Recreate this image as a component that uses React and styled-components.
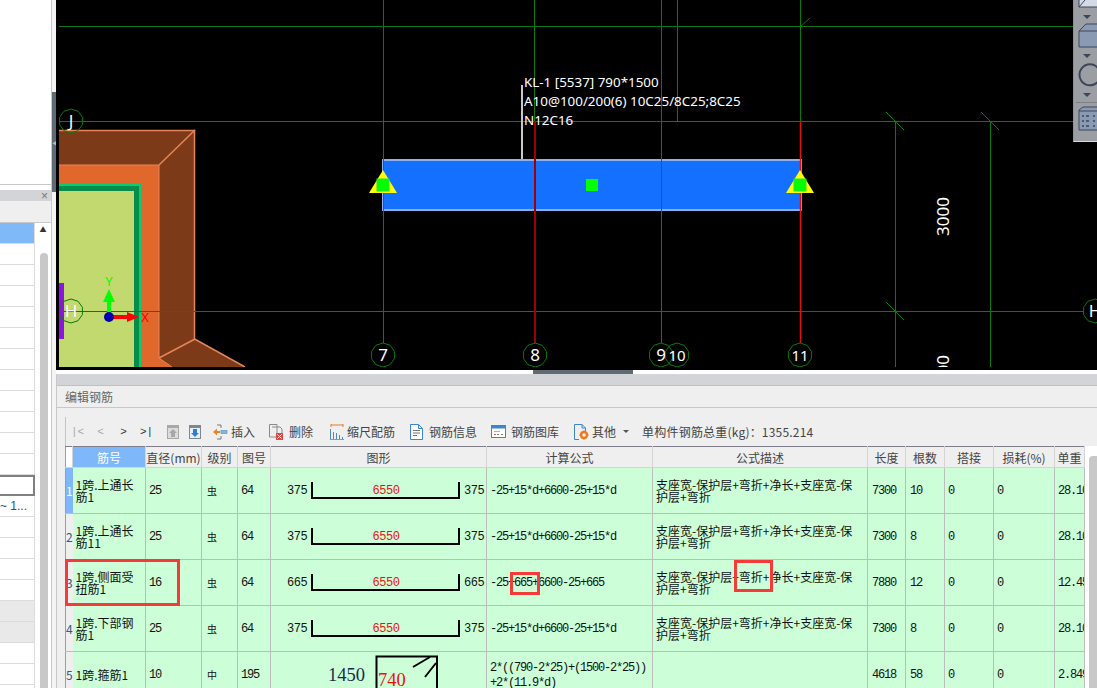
import styled, { createGlobalStyle } from "styled-components";

const GlobalStyle = createGlobalStyle`
  html, body { margin: 0; padding: 0; background: #fff; }
  body { font-family: "Noto Sans CJK SC", "Liberation Sans", sans-serif; }
`;

const Page = styled.div`
  width: 1097px;
  height: 688px;
  display: flex;
  overflow: hidden;
`;

/* ---------- left tree panel ---------- */
const Sidebar = styled.aside`
  width: 51px;
  flex: none;
  display: flex;
  flex-direction: column;
  background: #fff;
  border-right: 1px solid #c8c8cc;
`;
const SideBlank = styled.div`
  height: 184px;
  flex: none;
  border-bottom: 1px solid #c8c8cc;
`;
const SideGap = styled.div`
  height: 5px;
  flex: none;
`;
const SideHead = styled.div`
  height: 11px;
  flex: none;
  background: #d3d4d8;
  display: flex;
  justify-content: flex-end;
  align-items: center;
  padding-right: 3px;
  font: 12px "Liberation Sans", sans-serif;
  color: #777;
`;
const SideTools = styled.div`
  height: 21px;
  flex: none;
  background: #efefef;
  border-bottom: 1px solid #c8c8cc;
`;
const SideBody = styled.div`
  flex: 1;
  display: flex;
  overflow: hidden;
`;
const SideList = styled.div`
  width: 35px;
  flex: none;
`;
const SideRow = styled.div`
  box-sizing: border-box;
  height: 21px;
  border-bottom: 1px solid #dcdcdc;
  border-right: 1px solid #dcdcdc;
  background: ${({ $tone }) =>
    $tone === "selected" ? "#7fb9f8" : $tone === "shade" ? "#e9e9e9" : "#fff"};
  font: 12px/20px "Liberation Sans", sans-serif;
  color: #24527e;
  text-align: right;
  padding-right: 9px;
  white-space: nowrap;
  ${({ $tone }) => $tone === "outlined" && "border: 2px solid #808080; border-left: none;"}
`;
const SideScroll = styled.div`
  flex: 1;
  text-align: center;
  color: #333;
  font-size: 7px;
  line-height: 12px;
`;
const SideThumb = styled.div`
  width: 8px;
  height: 440px;
  margin: 18px 0 0 5px;
  border-radius: 4px 4px 0 0;
  background: #c8c8c8;
`;

const VSplitter = styled.div`
  width: 4px;
  flex: none;
  background: #f4f4f4;
  display: flex;
  flex-direction: column;
`;
const VHandle = styled.div`
  height: 100px;
  margin-top: 92px;
  background: #5f6a75;
  display: flex;
  align-items: center;
  color: #b8bdc2;
  font-size: 6px;
`;

/* ---------- main column ---------- */
const Main = styled.main`
  flex: 1;
  min-width: 0;
  display: flex;
  flex-direction: column;
`;
const Viewport = styled.div`
  height: 370px;
  flex: none;
  background: #000;
  position: relative;
  overflow: hidden;
`;
const Cad = styled.svg`
  display: block;
`;
const ToolRail = styled.div`
  position: absolute;
  top: 0;
  right: 0;
  width: 24px;
  height: 142px;
  background: #9b9ea2;
  border-left: 1px solid #8c8f93;
  border-bottom: 1px solid #d8d8d8;
  box-sizing: border-box;
  overflow: hidden;
`;
const HSplitter = styled.div`
  height: 4px;
  flex: none;
  background: #fff;
  padding-left: 477px;
`;
const HHandle = styled.div`
  width: 100px;
  height: 100%;
  background: #5f6a75;
`;

/* ---------- rebar panel ---------- */
const Panel = styled.section`
  flex: 1;
  min-height: 0;
  position: relative;
  background: #efefef;
  display: flex;
  flex-direction: column;
  overflow: hidden;
  border-left: 1px solid #c8c8cc;
`;
const PanelStrip = styled.div`
  height: 11px;
  flex: none;
  background: #d3d4d8;
  border-bottom: 1px solid #bfc0c4;
`;
const TitleBar = styled.div`
  height: 22px;
  flex: none;
  box-sizing: border-box;
  padding-left: 8px;
  border-bottom: 1px solid #c8c8cc;
  font-size: 12px;
  line-height: 21px;
  color: #666;
`;
const Toolbar = styled.div`
  height: 29px;
  flex: none;
  margin: 9px 0 0 8px;
  border-left: 1px solid #c4c4c8;
  display: flex;
  align-items: center;
  font-size: 12px;
  color: #444;
  white-space: nowrap;
`;
const NavGroup = styled.span`
  width: 96px;
  flex: none;
  display: flex;
`;
const NavBtn = styled.span`
  width: 23px;
  flex: none;
  text-align: center;
  font: 11px "Liberation Mono", monospace;
  color: ${({ $off }) => ($off ? "#a8a8a8" : "#333")};
`;
const PageBtn = styled.span`
  width: 22px;
  flex: none;
  display: flex;
  justify-content: center;
`;
const ToolBtn = styled.span`
  display: flex;
  align-items: center;
  gap: ${({ $gap }) => $gap || 3}px;
  margin-left: ${({ $ml }) => $ml}px;
`;
const Caret = styled.span`
  width: 0;
  height: 0;
  margin-left: 7px;
  border: 3px solid transparent;
  border-top: 3px solid #555;
  border-bottom: none;
`;
const Weight = styled.span`
  margin-left: 13px;
  letter-spacing: 0.2px;
`;

const TableWrap = styled.div`
  flex: none;
  display: flex;
  margin-left: 8px;
`;
const Grid = styled.table`
  width: 1020px;
  flex: none;
  align-self: flex-start;
  table-layout: fixed;
  border-collapse: collapse;
  border-top: 1px solid #7f7f8c;
  border-left: 1px solid #9c9ca8;
`;
const HeadCell = styled.th`
  height: 21px;
  padding: 0;
  box-sizing: border-box;
  font-size: 12px;
  font-weight: 400;
  white-space: nowrap;
  overflow: hidden;
  color: ${({ $active }) => ($active ? "#fff" : "#444")};
  background: ${({ $active, $corner }) =>
    $active ? "#7eb8fb" : $corner ? "#fff" : "#efefef"};
  border-right: 1px solid #d4d4d4;
  border-bottom: 1px solid #d4d4d4;
`;
const RowHead = styled.td`
  height: 46px;
  padding: 0;
  box-sizing: border-box;
  text-align: center;
  font-size: 12px;
  color: ${({ $active }) => ($active ? "#fff" : "#2d5a86")};
  background: ${({ $active }) => ($active ? "#7eb8fb" : "#efefef")};
  border-bottom: 1px solid #bdbdbd;
`;
const Cell = styled.td`
  height: 46px;
  padding: 0 0 0 ${({ $pad }) => $pad || 3}px;
  box-sizing: border-box;
  background: #ccffd8;
  color: #111;
  border-right: 1px solid #bdbdbd;
  border-bottom: 1px solid #bdbdbd;
  overflow: hidden;
  white-space: pre-line;
  font-size: ${({ $small }) => ($small ? 10 : 12)}px;
  line-height: 12px;
`;
const Num = styled.span`
  font: 12px/13px "Liberation Mono", monospace;
  letter-spacing: -1.2px;
  white-space: pre-line;
`;
const ShapeCell = styled(Cell)`
  padding: 0;
`;
const Shape = styled.svg`
  display: block;
`;
const GridScroll = styled.div`
  flex: 1;
  background: #fff;
  padding: 10px 0 0 4px;
`;
const GridThumb = styled.div`
  height: 300px;
  background: #c8c8c8;
  border-radius: 4px 0 0 0;
`;
const Mark = styled.div`
  position: absolute;
  left: ${({ $x }) => $x}px;
  top: ${({ $y }) => $y}px;
  width: ${({ $w }) => $w}px;
  height: ${({ $h }) => $h}px;
  box-sizing: border-box;
  border: 3px solid #f53a3a;
  pointer-events: none;
`;

/* ---------- drawings ---------- */
const GREEN = "#0a7a0a";
const RED = "#e01010";

const Bubble = ({ x, y, label }) => {
  const pts = Array.from({ length: 10 }, (_, i) => {
    const a = (Math.PI / 5) * i + Math.PI / 10;
    return `${x + 12 * Math.cos(a)},${y + 12 * Math.sin(a)}`;
  }).join(" ");
  return (
    <g>
      <polygon points={pts} fill="none" stroke={GREEN} />
      <text
        x={x}
        y={y + 6}
        textAnchor="middle"
        fill="#fff"
        fontFamily="Noto Sans, sans-serif"
        fontSize={label.length > 1 ? 15 : 17}
      >
        {label}
      </text>
    </g>
  );
};

const Tick = ({ x, y }) => (
  <line x1={x - 9} y1={y - 9} x2={x + 9} y2={y + 9} stroke={GREEN} />
);

const Anchor = ({ x }) => (
  <g>
    <polygon points={`${x},170 ${x + 14},193 ${x - 14},193`} fill="#ffff00" />
    <rect x={x - 6} y={179} width={12} height={12} fill="#00ff00" stroke="#33dd33" />
  </g>
);

const CadDrawing = () => (
  <Cad width="1041" height="370" viewBox="56 0 1041 370">
    <defs>
      <clipPath id="sheet">
        <rect x="59" y="0" width="1038" height="367" />
      </clipPath>
    </defs>
    <g clipPath="url(#sheet)">
      {/* column */}
      <polygon points="59,130 195,130 195,339 245,367 59,367" fill="#7d3a18" />
      <polygon points="59,165 159,165 159,358 172,367 59,367" fill="#e0682c" />
      <polyline points="59,130.5 194.5,130.5 194.5,339 245,367" fill="none" stroke="#e8845a" strokeWidth="1.5" />
      <polyline points="59,165 159,165 159,358 172,367" fill="none" stroke="#e8845a" />
      <line x1="159" y1="165" x2="195" y2="130" stroke="#e8845a" strokeWidth="1.5" />
      <line x1="159" y1="358" x2="195" y2="339" stroke="#e8845a" strokeWidth="1.5" />
      <rect x="59" y="184" width="82" height="190" fill="#00d070" />
      <rect x="59" y="186" width="80" height="190" fill="#078c4c" />
      <rect x="59" y="191" width="75" height="180" fill="#c2d970" />
      <rect x="59" y="283" width="5" height="56" fill="#8c14e0" />

      {/* axis lines */}
      <line x1="59" y1="26.5" x2="1097" y2="26.5" stroke={GREEN} />
      <line x1="383.5" y1="0" x2="383.5" y2="121" stroke={GREEN} />
      <line x1="534.5" y1="0" x2="534.5" y2="121" stroke={GREEN} />
      <line x1="661.5" y1="0" x2="661.5" y2="121" stroke={GREEN} />
      <line x1="677.5" y1="0" x2="677.5" y2="121" stroke={GREEN} />
      <line x1="800.5" y1="0" x2="800.5" y2="121" stroke={GREEN} />
      <line x1="801" y1="121.5" x2="1073" y2="121.5" stroke={GREEN} />
      <line x1="801" y1="311.5" x2="1084" y2="311.5" stroke={GREEN} />
      <line x1="895.5" y1="121" x2="895.5" y2="367" stroke={GREEN} />
      <line x1="990.5" y1="121" x2="990.5" y2="367" stroke={GREEN} />
      <line x1="800" y1="27" x2="810" y2="18" stroke={GREEN} />
      <Tick x={895} y={121} />
      <Tick x={990} y={121} />
      <Tick x={895} y={311} />

      <line x1="59" y1="121.5" x2="801" y2="121.5" stroke={RED} />
      <line x1="59" y1="311.5" x2="801" y2="311.5" stroke={RED} />

      {/* beam */}
      <line x1="522" y1="85" x2="522" y2="160" stroke="#c8c8c8" strokeWidth="2" />
      <rect x="383" y="160" width="418" height="50" fill="#1470ff" stroke="#8ab0ee" strokeWidth="2" />
      <line x1="383.5" y1="121" x2="383.5" y2="343" stroke={RED} />
      <line x1="535" y1="121" x2="535" y2="343" stroke="#a00000" strokeWidth="2" />
      <line x1="661.5" y1="121" x2="661.5" y2="343" stroke={RED} />
      <line x1="800.5" y1="121" x2="800.5" y2="343" stroke={RED} strokeWidth="1.5" />
      <Anchor x={383} />
      <Anchor x={800} />
      <rect x="586" y="179" width="12" height="12" fill="#00ff00" />

      <g fill="#fff" fontFamily="Noto Sans, sans-serif" fontSize="13.4">
        <text x="524" y="87">KL-1 [5537] 790*1500</text>
        <text x="524" y="106">A10@100/200(6) 10C25/8C25;8C25</text>
        <text x="524" y="125">N12C16</text>
      </g>
      <g fill="#fff" fontFamily="Noto Sans, sans-serif" fontSize="17">
        <text transform="translate(949 216.5) rotate(-90)" textAnchor="middle">3000</text>
        <text transform="translate(949 355) rotate(-90)" textAnchor="end">3000</text>
      </g>

      <Bubble x={71} y={121} label="J" />
      <Bubble x={71} y={311} label="H" />
      <Bubble x={1095} y={311} label="H" />
      <Bubble x={383} y={355} label="7" />
      <Bubble x={535} y={355} label="8" />
      <Bubble x={661} y={355} label="9" />
      <Bubble x={677} y={355} label="10" />
      <Bubble x={800} y={355} label="11" />

      {/* origin gizmo */}
      <rect x="107" y="300" width="4" height="16" fill="#00ff00" />
      <polygon points="109,289 115,302 103,302" fill="#00ff00" />
      <rect x="109" y="315" width="20" height="4" fill="#ff0000" />
      <polygon points="139,317 127,312 127,322" fill="#ff0000" />
      <circle cx="109" cy="317" r="5" fill="#0000b0" />
      <g fontFamily="Noto Sans, sans-serif" fontSize="13">
        <text x="109" y="286" textAnchor="middle" fill="#00ff00">Y</text>
        <text x="145" y="322" textAnchor="middle" fill="#ff0000">X</text>
      </g>
    </g>
  </Cad>
);

const RailIcons = () => (
  <svg width="24" height="142" viewBox="0 0 24 142">
    <g fill="none" stroke="#3c4658" strokeWidth="1">
      <path d="M5 -3 H26 V7 H5 Z M5 7 L11 0" fill="#d5dbe6" />
      <path d="M5 47 V31 L12 24 H28 V47 Z" fill="#8a9ab2" />
      <path d="M5 31 H24 L28 24 M24 31 V47" />
      <path d="M24 68 A10.5 10.5 0 1 0 26 78" strokeWidth="2" />
      <path d="M5 130 V110 L9 107 H28 V130 Z" fill="#8a9ab2" />
      <path d="M5 111 H28" />
      <path d="M8 116 H10 M8 121 H10 M8 126 H10 M12 116 H15 M12 121 H15 M12 126 H15 M19 116 H21 M19 121 H21 M19 126 H21" strokeWidth="1.5" />
    </g>
    <g fill="#3c4658">
      <polygon points="9,15 17,15 13,19" />
      <polygon points="9,54 17,54 13,58" />
      <polygon points="9,93 17,93 13,97" />
    </g>
    <line x1="2" y1="102.5" x2="24" y2="102.5" stroke="#7c7f83" />
  </svg>
);

const UpIcon = () => (
  <svg width="12" height="14" viewBox="0 0 12 14">
    <rect x="0.5" y="0.5" width="11" height="13" fill="#dcdcdc" stroke="#a8a8a8" />
    <rect x="1" y="1" width="10" height="2" fill="#a8a8a8" />
    <path d="M6 4 L10 8 H8 V12 H4 V8 H2 Z" fill="#a8a8a8" />
  </svg>
);
const DownIcon = () => (
  <svg width="12" height="14" viewBox="0 0 12 14">
    <rect x="0.5" y="0.5" width="11" height="13" fill="#e8eef6" stroke="#7c8794" />
    <rect x="1" y="1" width="10" height="2" fill="#7c8794" />
    <path d="M6 12 L2 8 H4 V4 H8 V8 H10 Z" fill="#2d7fd2" />
  </svg>
);
const InsertIcon = () => (
  <svg width="15" height="16" viewBox="0 0 15 16">
    <path d="M4 1 H8 M8 1 V4 M4 15 H8 M8 15 V12" stroke="#777" fill="none" />
    <path d="M0 8 L4 4.5 V7 H7 V9 H4 V11.5 Z" fill="#f08020" />
    <rect x="8" y="6.5" width="6" height="3" fill="#8ab4e0" stroke="#4f8ac8" strokeWidth="0.6" />
  </svg>
);
const DeleteIcon = () => (
  <svg width="15" height="16" viewBox="0 0 15 16">
    <path d="M0.5 0.5 H8 V13 H0.5 Z M3 3 H11 L13 5 V9" fill="none" stroke="#8a8a8a" />
    <rect x="7" y="9" width="7" height="7" fill="#e04848" />
    <path d="M8.5 10.5 L12.5 14.5 M12.5 10.5 L8.5 14.5" stroke="#fff" />
  </svg>
);
const ScaleIcon = () => (
  <svg width="14" height="16" viewBox="0 0 14 16">
    <path d="M1 1 H13 M1 0 V3 M13 0 V3" stroke="#e87a28" fill="none" />
    <path d="M0.5 5 V15 M3.5 8 V15 M6.5 9 V15 M9.5 11 V15 M12.5 13 V15" stroke="#4f8ac8" fill="none" />
    <path d="M0 15.5 H14" stroke="#999" />
  </svg>
);
const InfoIcon = () => (
  <svg width="13" height="16" viewBox="0 0 13 16">
    <path d="M0.5 0.5 H8.5 L12.5 4.5 V15.5 H0.5 Z M8.5 0.5 V4.5 H12.5" fill="#fff" stroke="#3d85d0" />
    <path d="M3 6.5 H10 M3 9 H10 M3 11.5 H7" stroke="#777" />
  </svg>
);
const LibraryIcon = () => (
  <svg width="15" height="13" viewBox="0 0 15 13">
    <rect x="0.5" y="0.5" width="14" height="12" fill="#fff" stroke="#3d85d0" />
    <rect x="0.5" y="0.5" width="14" height="3" fill="#3d85d0" />
    <path d="M3 6.5 H9" stroke="#e0b040" />
    <path d="M3 9.5 H5 M6 9.5 H8" stroke="#d85050" />
    <path d="M10 9.5 H12" stroke="#50a050" />
  </svg>
);
const OtherIcon = () => (
  <svg width="15" height="16" viewBox="0 0 15 16">
    <path d="M0.5 15.5 V0.5 H8 L11.5 4 V7 M8 0.5 V4 H11.5 M0.5 15.5 H5" fill="none" stroke="#3d85d0" />
    <circle cx="10" cy="11" r="3" fill="none" stroke="#ee7a1c" strokeWidth="2.4" />
    <path d="M10 6.5 V8 M10 14 V15.5 M5.5 11 H7 M13 11 H14.5 M7 8 L8 9 M12 13 L13 14 M13 8 L12 9 M8 13 L7 14" stroke="#ee7a1c" strokeWidth="1.4" />
  </svg>
);

const Bent = ({ left, right }) => (
  <Shape width="215" height="45" viewBox="0 0 215 45">
    <g fontFamily="Liberation Mono, monospace" fontSize="12" letterSpacing="-0.5">
      <text x="16" y="26" fill="#111">{left}</text>
      <text x="193" y="26" fill="#111">{right}</text>
      <text x="115" y="26" fill="#f01010" textAnchor="middle">6550</text>
    </g>
    <path d="M41 14 V30 H188 V14" fill="none" stroke="#000" strokeWidth="2" />
  </Shape>
);

const Stirrup = () => (
  <Shape width="215" height="45" viewBox="0 0 215 45">
    <text x="57" y="29" fontFamily="Liberation Serif, serif" fontSize="18.5" fill="#1a2a4a">1450</text>
    <path d="M105.5 50 V4.5 H166 V50" fill="none" stroke="#000" strokeWidth="2" />
    <path d="M142 15 L159 5 M154 25 L165 11" stroke="#000" strokeWidth="2" />
    <text x="107" y="34" fontFamily="Liberation Serif, serif" fontSize="18.5" fill="#f01010">740</text>
  </Shape>
);

/* ---------- data ---------- */
const columns = [
  ["", 7],
  ["筋号", 73],
  ["直径(mm)", 56],
  ["级别", 36],
  ["图号", 33],
  ["图形", 216],
  ["计算公式", 166],
  ["公式描述", 215],
  ["长度", 38],
  ["根数", 39],
  ["搭接", 49],
  ["损耗(%)", 61],
  ["单重", 30],
];

const DESC = "支座宽-保护层+弯折+净长+支座宽-保\n护层+弯折";
const F15 = "-25+15*d+6600-25+15*d";

const rows = [
  { no: 1, name: "1跨.上通长\n筋1", dia: 25, grade: "虫", fig: 64, shape: <Bent left="375" right="375" />, formula: F15, desc: DESC, len: 7300, count: 10, unit: "28.10" },
  { no: 2, name: "1跨.上通长\n筋11", dia: 25, grade: "虫", fig: 64, shape: <Bent left="375" right="375" />, formula: F15, desc: DESC, len: 7300, count: 8, unit: "28.10" },
  { no: 3, name: "1跨.侧面受\n扭筋1", dia: 16, grade: "虫", fig: 64, shape: <Bent left="665" right="665" />, formula: "-25+665+6600-25+665", desc: DESC, len: 7880, count: 12, unit: "12.45" },
  { no: 4, name: "1跨.下部钢\n筋1", dia: 25, grade: "虫", fig: 64, shape: <Bent left="375" right="375" />, formula: F15, desc: DESC, len: 7300, count: 8, unit: "28.10" },
  { no: 5, name: "1跨.箍筋1", dia: 10, grade: "中", fig: 195, shape: <Stirrup />, formula: "2*((790-2*25)+(1500-2*25))\n+2*(11.9*d)", desc: "", len: 4618, count: 58, unit: "2.849" },
];

const sideRows = [
  "selected", "", "", "", "", "", "", "", "", "", "", "", "outlined", "text", "", "", "", "", "shade", "shade", "", "", "",
];

export default function App() {
  return (
    <Page>
      <GlobalStyle />
      <Sidebar>
        <SideBlank />
        <SideGap />
        <SideHead>×</SideHead>
        <SideTools />
        <SideBody>
          <SideList>
            {sideRows.map((tone, i) => (
              <SideRow key={i} $tone={tone}>
                {tone === "text" ? "~ 1..." : ""}
              </SideRow>
            ))}
          </SideList>
          <SideScroll>
            ▲
            <SideThumb />
          </SideScroll>
        </SideBody>
      </Sidebar>
      <VSplitter>
        <VHandle>◀</VHandle>
      </VSplitter>
      <Main>
        <Viewport>
          <CadDrawing />
          <ToolRail>
            <RailIcons />
          </ToolRail>
        </Viewport>
        <HSplitter>
          <HHandle />
        </HSplitter>
        <Panel>
          <PanelStrip />
          <TitleBar>编辑钢筋</TitleBar>
          <Toolbar>
            <NavGroup>
              <NavBtn $off>|&lt;</NavBtn>
              <NavBtn $off>&lt;</NavBtn>
              <NavBtn>&gt;</NavBtn>
              <NavBtn>&gt;|</NavBtn>
            </NavGroup>
            <PageBtn><UpIcon /></PageBtn>
            <PageBtn><DownIcon /></PageBtn>
            <ToolBtn $ml={7}><InsertIcon />插入</ToolBtn>
            <ToolBtn $ml={14} $gap={5}><DeleteIcon />删除</ToolBtn>
            <ToolBtn $ml={17}><ScaleIcon />缩尺配筋</ToolBtn>
            <ToolBtn $ml={15} $gap={6}><InfoIcon />钢筋信息</ToolBtn>
            <ToolBtn $ml={14} $gap={5}><LibraryIcon />钢筋图库</ToolBtn>
            <ToolBtn $ml={15}><OtherIcon />其他</ToolBtn>
            <Caret />
            <Weight>单构件钢筋总重(kg)：1355.214</Weight>
          </Toolbar>
          <TableWrap>
            <Grid>
              <colgroup>
                {columns.map(([title, w]) => (
                  <col key={title} width={w} />
                ))}
              </colgroup>
              <thead>
                <tr>
                  {columns.map(([title], i) => (
                    <HeadCell key={title} $corner={i === 0} $active={i === 1}>
                      {title}
                    </HeadCell>
                  ))}
                </tr>
              </thead>
              <tbody>
                {rows.map((r) => (
                  <tr key={r.no}>
                    <RowHead $active={r.no === 1}>{r.no}</RowHead>
                    <Cell>{r.name}</Cell>
                    <Cell><Num>{r.dia}</Num></Cell>
                    <Cell $pad={5} $small>{r.grade}</Cell>
                    <Cell><Num>{r.fig}</Num></Cell>
                    <ShapeCell>{r.shape}</ShapeCell>
                    <Cell><Num>{r.formula}</Num></Cell>
                    <Cell>{r.desc}</Cell>
                    <Cell $pad={4}><Num>{r.len}</Num></Cell>
                    <Cell $pad={4}><Num>{r.count}</Num></Cell>
                    <Cell><Num>0</Num></Cell>
                    <Cell><Num>0</Num></Cell>
                    <Cell><Num>{r.unit}</Num></Cell>
                  </tr>
                ))}
              </tbody>
            </Grid>
            <GridScroll>
              <GridThumb />
            </GridScroll>
          </TableWrap>
          <Mark $x={8} $y={185} $w={115} $h={47} />
          <Mark $x={453} $y={198} $w={30} $h={23} />
          <Mark $x={677} $y={186} $w={39} $h={32} />
        </Panel>
      </Main>
    </Page>
  );
}
